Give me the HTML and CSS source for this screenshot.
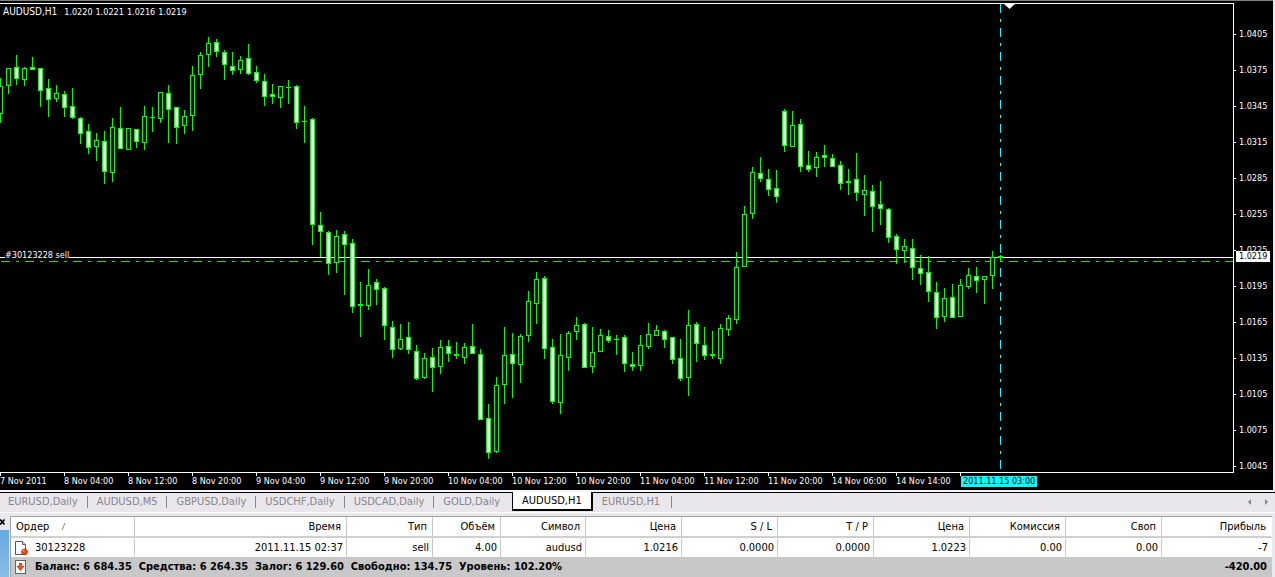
FILE: index.html
```html
<!DOCTYPE html>
<html lang="ru">
<head>
<meta charset="utf-8">
<title>AUDUSD,H1</title>
<link rel="stylesheet" href="styles.css">
</head>
<body>
<main class="terminal">
  <section class="chart">
    <div class="plot">
      <svg class="plot-svg" id="plot" role="img" aria-label="AUDUSD,H1"></svg>
      <h1 class="chart-title"><span class="symbol">AUDUSD,H1</span> <span>1.0220</span> <span>1.0221</span> <span>1.0216</span> <span>1.0219</span></h1>
      <span class="order-label">#30123228 sell</span>
    </div>
    <div class="price-axis" id="prices"><span class="price-now">1.0219</span></div>
    <div class="time-axis" id="times"><span class="time-now">2011.11.15 03:00</span></div>
  </section>

  <nav class="tabs">
    <button class="tab">EURUSD,Daily</button>
    <button class="tab">AUDUSD,M5</button>
    <button class="tab">GBPUSD,Daily</button>
    <button class="tab">USDCHF,Daily</button>
    <button class="tab">USDCAD,Daily</button>
    <button class="tab tab-last">GOLD,Daily</button>
    <button class="tab tab-active">AUDUSD,H1</button>
    <button class="tab tab-after">EURUSD,H1</button>
    <span class="tab-scroll">
      <button class="arrow" aria-label="Назад"><svg width="4" height="6"><path d="M4 0v6L1 3z"/></svg></button>
      <button class="arrow" aria-label="Вперёд"><svg width="4" height="6"><path d="M0 0v6L3 3z"/></svg></button>
    </span>
  </nav>

  <section class="orders">
    <div class="side">
      <button class="close" aria-label="Закрыть"><svg width="5" height="6" viewBox="0 0 5 6"><path d="M0 .5 4.5 5.5M4.5 .5 0 5.5" stroke="#000" stroke-width="1.6"/></svg></button>
      <div class="side-bar"></div>
    </div>
    <div class="panel">
      <table class="grid">
        <colgroup>
          <col class="c-order"><col><col class="c-type"><col class="c-vol"><col class="c-sym"><col class="c-num"><col class="c-num"><col class="c-num"><col class="c-num"><col class="c-num"><col class="c-num"><col class="c-profit">
        </colgroup>
        <thead>
          <tr><th class="first">Ордер<svg class="sort" width="5" height="7"><path d="M1 7 4 0" stroke="#888" fill="none"/></svg></th><th>Время</th><th>Тип</th><th>Объём</th><th>Символ</th><th>Цена</th><th>S / L</th><th>T / P</th><th>Цена</th><th>Комиссия</th><th>Своп</th><th>Прибыль</th></tr>
        </thead>
        <tbody>
          <tr><td class="first"><span class="cell"><svg width="15" height="16" viewBox="0 0 15 16"><path d="M1.500 1.500h7l3 3v10h-10z" fill="#fff" stroke="#555"/><path d="M8.500 1.500v3h3" fill="#ddd" stroke="#555"/><circle cx="10.500" cy="12" r="3" fill="#e8481c" stroke="#b83c14" stroke-width=".8"/><circle cx="9.500" cy="11" r="1" fill="#ff9a70"/></svg>30123228</span></td><td>2011.11.15 02:37</td><td>sell</td><td>4.00</td><td>audusd</td><td>1.0216</td><td>0.0000</td><td>0.0000</td><td>1.0223</td><td>0.00</td><td>0.00</td><td>-7</td></tr>
        </tbody>
      </table>
      <div class="summary">
        <svg width="15" height="16" viewBox="0 0 15 16"><rect x="1.500" y="1.500" width="10" height="13" fill="#fff" stroke="#666"/><path d="M5.200 4.500h2.600v3h2L6.500 11.500 3.200 7.500h2z" fill="#f05a20" stroke="#a83208" stroke-width=".8"/></svg>
        <span>Баланс: 6 684.35&nbsp; Средства: 6 264.35&nbsp; Залог: 6 129.60&nbsp; Свободно: 134.75&nbsp; Уровень: 102.20%</span>
        <span class="total">-420.00</span>
      </div>
    </div>
  </section>
</main>
<script src="chart.js"></script>
</body>
</html>
```

FILE: styles.css
```css
* { box-sizing: border-box; }
body {
  margin: 0;
  background: #e9e8ec;
  color: #000;
  font-family: "DejaVu Sans Condensed", "Noto Sans", sans-serif;
  font-size: 11px;
  line-height: 14px;
}
button {
  margin: 0;
  padding: 0;
  border: 0;
  background: none;
  color: inherit;
  font: inherit;
}
svg { display: block; flex: none; }
.terminal { display: flex; flex-direction: column; min-height: 100vh; }

.chart {
  display: grid;
  grid-template-columns: 1fr 39px;
  grid-template-rows: 472px 17px;
  margin-right: 2px;
  border-top: 1px solid #808080;
  background: #000;
  color: #fff;
  font-size: 9px;
  line-height: 11px;
}
.plot {
  position: relative;
  margin-top: 2px;
  border: solid #fff;
  border-width: 1px 1px 1px 0;
}
.plot-svg { width: 100%; height: 100%; overflow: hidden; }
.chart-title {
  position: absolute;
  top: 2px;
  left: 3px;
  display: flex;
  gap: 3px;
  align-items: baseline;
  margin: 0;
  font-size: 9px;
  font-weight: normal;
}
.symbol { margin-right: 4px; font-size: 10px; }
.order-label {
  position: absolute;
  top: 246px;
  left: 5px;
  background: linear-gradient(#000, #000) 0 7px / 100% 1px no-repeat;
}
.price-axis {
  position: relative;
  display: flex;
  flex-direction: column;
  height: 472px;
  padding-top: 15px;
}
.price {
  display: flex;
  flex: none;
  align-items: center;
  gap: 3px;
  height: 36px;
}
.price::before { content: ""; width: 2px; height: 1px; background: #fff; }
.price-now {
  position: absolute;
  top: 250px;
  left: 2px;
  right: 3px;
  padding-left: 3px;
  background: #fff;
  color: #000;
}
.time-axis {
  position: relative;
  grid-column: 1 / -1;
  display: flex;
}
.time {
  position: relative;
  flex: 0 0 64px;
  padding-top: 3px;
  white-space: nowrap;
}
.time::before {
  content: "";
  position: absolute;
  top: 0;
  left: 0;
  width: 1px;
  height: 3px;
  background: #fff;
}
.time-now {
  position: absolute;
  z-index: 1;
  top: 3px;
  left: 961px;
  padding: 0 2px;
  background: #0ff;
  color: #000;
}

.tabs {
  display: flex;
  height: 23px;
  border-top: 2px solid #f4f4f4;
  border-bottom: 1px solid #fff;
  background: linear-gradient(#000, #000) 0 0 / 100% 1px no-repeat #e9e7ec;
  color: #85858a;
}
.tab {
  position: relative;
  height: 19px;
  padding: 0 10px 0 9px;
  white-space: nowrap;
}
.tab:first-child { padding-left: 8px; }
.tab::after {
  content: "";
  position: absolute;
  top: 4px;
  right: 0;
  width: 1px;
  height: 12px;
  background: #85858a;
}
.tab-last::after, .tab-active::after { display: none; }
.tab-last, .tab-after { padding-right: 12px; }
.tab-active {
  padding: 0 9px;
  border: solid #000;
  border-width: 0 2px 2px 1px;
  background: #fff;
  color: #000;
}
.tab-scroll {
  display: flex;
  align-items: center;
  gap: 14px;
  margin-left: auto;
  padding-right: 6px;
}
.arrow { fill: #85858a; }

.orders { display: flex; flex: 1; padding-top: 3px; }
.side { display: flex; flex: 0 0 10px; flex-direction: column; }
.close { padding: 3px 0 5px; }
.side-bar { flex: 1; margin-right: 1px; background: linear-gradient(#64a8e0, #8cbce4); }
.panel {
  display: flex;
  flex: 1;
  flex-direction: column;
  margin-right: 3px;
  border: solid #a0a0a0;
  border-width: 1px 0 0 1px;
}
.grid {
  width: 100%;
  border-collapse: separate;
  border-spacing: 0;
  table-layout: fixed;
  background: #fff;
}
.c-order { width: 124px; }
.c-type { width: 86px; }
.c-vol { width: 68px; }
.c-sym { width: 85px; }
.c-num { width: 96px; }
.c-profit { width: 110px; }
.grid th, .grid td {
  padding: 0 5px 0 0;
  border-right: 1px solid #c8c8c8;
  font-weight: normal;
  text-align: right;
  white-space: nowrap;
}
.grid th { height: 21px; border-bottom: 2px solid #d0d0d0; }
.grid th.first { padding-left: 5px; text-align: left; }
.sort { display: inline-block; margin-left: 12px; }
.grid td { height: 19px; padding-right: 3px; }
.grid td.first { padding: 0 0 0 3px; }
.grid tr > :last-child { border-right-color: transparent; }
.cell { display: flex; align-items: center; gap: 6px; }
.summary {
  display: flex;
  flex: 1;
  align-items: center;
  gap: 6px;
  padding: 0 5px 0 3px;
  background: #c8c8c8;
  font-weight: bold;
  white-space: nowrap;
}
.total { margin-left: auto; }
```

FILE: chart.js
```js
const NS = "http://www.w3.org/2000/svg";
const plot = document.getElementById("plot");
const STEP = 8;
const TOP = 4;

// One bar per row: high, body top, body bottom, low, filled (1) or hollow (0)
const bars = [
  [78,86,114,123,0],[68,68,86,94,0],[55,67,79,85,1],[67,68,80,86,0],[57,67,70,70,1],
  [68,68,91,107,1],[79,88,100,117,1],[85,93,99,102,0],[91,94,108,117,1],[88,106,118,119,1],
  [117,118,134,144,1],[124,131,148,154,1],[133,140,147,161,0],[131,141,172,184,1],[118,127,173,182,0],
  [107,128,149,149,1],[128,128,150,150,0],[129,129,142,148,1],[106,116,143,150,0],[107,117,118,132,0],
  [92,92,119,123,0],[85,93,110,143,1],[107,107,128,144,1],[110,116,126,134,0],[66,75,116,131,0],
  [52,55,75,89,0],[37,43,55,67,0],[39,42,52,57,1],[50,52,65,80,1],[52,66,71,75,1],
  [56,60,70,74,0],[44,58,74,75,1],[66,72,81,83,1],[74,81,97,106,1],[84,94,97,104,1],
  [86,86,98,108,0],[80,87,88,104,0],[85,86,123,129,1],[106,121,122,143,0],[118,119,225,245,1],
  [212,225,232,257,1],[231,232,264,275,1],[230,236,263,273,0],[231,234,245,295,1],[239,243,307,313,1],
  [282,304,306,337,1],[269,285,306,310,0],[279,282,290,305,1],[287,288,326,340,1],[321,327,350,358,1],
  [324,339,349,350,0],[322,337,350,354,1],[345,351,379,380,1],[353,358,378,379,0],[348,357,368,392,1],
  [340,347,367,374,0],[340,346,354,362,1],[342,354,356,359,1],[343,347,358,364,0],[324,346,354,354,1],
  [349,354,420,420,1],[404,418,453,459,1],[377,385,452,453,0],[327,355,385,404,0],[333,354,364,398,1],
  [334,336,365,383,0],[291,301,336,342,0],[272,279,304,324,0],[276,278,349,359,1],[339,347,402,404,1],
  [334,355,403,414,0],[331,333,358,371,0],[317,325,332,340,0],[323,324,368,368,1],[327,352,367,373,0],
  [329,335,352,352,0],[330,336,341,343,1],[335,339,340,355,0],[335,337,364,372,1],[352,364,367,371,1],
  [335,345,366,371,0],[323,334,347,349,0],[325,330,336,336,0],[330,331,340,348,1],[337,337,360,364,1],
  [339,358,379,381,1],[310,325,378,396,0],[322,324,344,362,1],[327,345,356,360,1],[331,354,356,359,1],
  [324,328,359,364,0],[315,318,330,336,0],[252,267,320,324,0],[206,214,267,267,0],[167,172,214,219,0],
  [157,173,179,182,1],[169,179,190,196,1],[170,188,197,203,1],[109,111,146,152,1],[111,125,147,147,0],
  [119,124,167,172,1],[151,165,170,172,1],[152,157,168,177,0],[145,155,158,167,1],[154,158,167,167,1],
  [161,165,184,190,1],[169,181,183,195,1],[153,179,193,201,1],[175,190,195,216,0],[185,191,207,232,1],
  [181,204,209,225,1],[208,209,238,243,1],[234,236,250,264,1],[239,246,251,263,0],[239,248,268,280,1],
  [255,268,274,285,1],[256,272,292,302,1],[282,292,318,329,1],[288,298,317,322,0],[284,297,318,318,1],
  [279,285,317,317,0],[268,275,287,289,0],[267,276,281,293,1],[276,276,280,304,0],[251,257,276,289,0],
  [255,256,258,262,1]
];

function add(tag, attrs) {
  const node = document.createElementNS(NS, tag);
  for (const key in attrs) node.setAttribute(key, attrs[key]);
  plot.appendChild(node);
}
function box(x, y, width, height, fill) {
  add("rect", { x, y: y - TOP, width, height, fill });
}

// bid line, order line and time marker
box(0, 257, "100%", 1, "#fff");
add("line", { x1: 1, y1: 261.5 - TOP, x2: "100%", y2: 261.5 - TOP, stroke: "#32cd32", "stroke-dasharray": "9 6 3 6" });
add("line", { x1: 1000.5, y1: 0, x2: 1000.5, y2: 466, stroke: "#0ff", "stroke-dasharray": "9 6 3 6" });

bars.forEach(([high, top, bottom, low, filled], i) => {
  const x = i * STEP;
  box(x, high, 1, low - high, "#0f0");
  box(x - 2, top, 5, bottom - top, "#0f0");
  if (bottom - top > 2) box(x - 1, top + 1, 3, bottom - top - 2, filled ? "#fff" : "#000");
});
add("path", { d: "M1004 0h11l-5.500 5z", fill: "#fff" });

function label(parent, className, text) {
  const node = document.createElement("span");
  node.className = className;
  node.textContent = text;
  parent.appendChild(node);
}
const prices = document.getElementById("prices");
for (let p = 10405; p >= 10045; p -= 30) label(prices, "price", (p / 10000).toFixed(4));

const times = document.getElementById("times");
["7 Nov 2011", "8 Nov 04:00", "8 Nov 12:00", "8 Nov 20:00", "9 Nov 04:00", "9 Nov 12:00", "9 Nov 20:00",
 "10 Nov 04:00", "10 Nov 12:00", "10 Nov 20:00", "11 Nov 04:00", "11 Nov 12:00", "11 Nov 20:00",
 "14 Nov 06:00", "14 Nov 14:00", ""].forEach(t => label(times, "time", t));
```
